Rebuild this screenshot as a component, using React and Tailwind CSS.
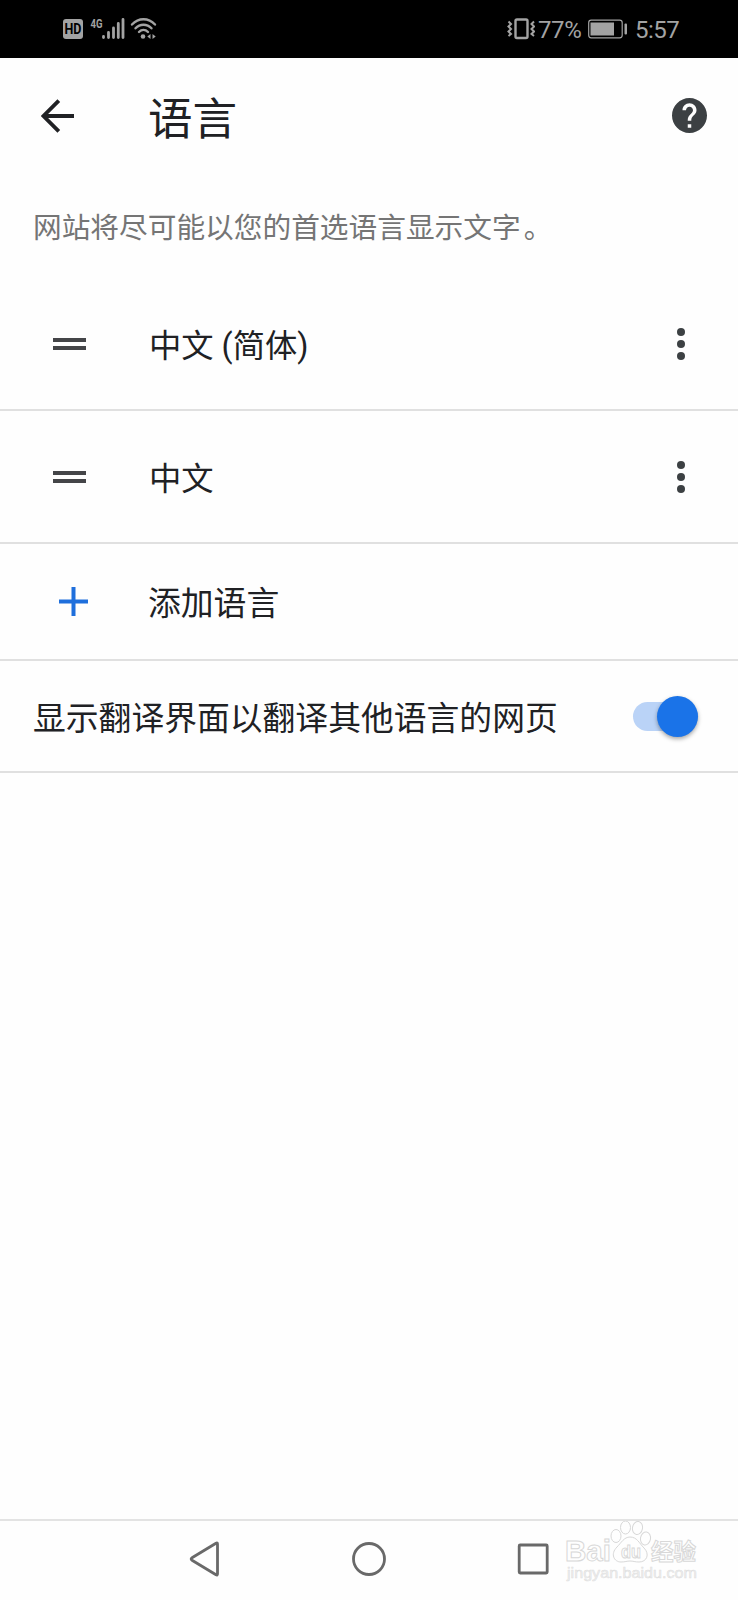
import React, { useState } from "react";

const languages = [
  { id: "zh-CN", name: "中文 (简体)" },
  { id: "zh", name: "中文" },
];

/* ------------------------------
   STATUS BAR
------------------------------ */

const StatusBar = () => {
  return (
    <div className="flex h-[58px] items-center justify-between bg-black pl-[63px] pr-[59px] text-[#a3a3a3]">
      <svg width="95" height="28" viewBox="63 15 95 28" fill="none">
        <rect x="63" y="19" width="20" height="20" rx="3" fill="#a3a3a3" />
        <text
          x="73"
          y="34.2"
          textAnchor="middle"
          fontSize="14"
          fontWeight="700"
          fill="#000"
          textLength="17"
          lengthAdjust="spacingAndGlyphs"
          className="font-['Roboto',sans-serif]"
        >
          HD
        </text>
        <text
          x="90.5"
          y="27.5"
          fontSize="12.5"
          fontWeight="700"
          fill="#a3a3a3"
          textLength="12"
          lengthAdjust="spacingAndGlyphs"
          className="font-['Roboto',sans-serif]"
        >
          4G
        </text>
        <g stroke="#a3a3a3" strokeWidth="2.8" strokeLinecap="round">
          <path d="M103.5 36.5v1M108.5 32.5v5M113.5 28v9.5M118.3 23.5v14M123 19.5v18" />
        </g>
        <g stroke="#a3a3a3" strokeWidth="2.4" strokeLinecap="round">
          <path d="M132 24.5C138.500 17.500 148.500 17.500 155 24.500" />
          <path d="M135.500 28.300C140 23.500 147 23.500 151.500 28.300" />
          <path d="M139 32C141.700 29.200 145.300 29.200 148 32" />
        </g>
        <circle cx="143" cy="36.500" r="2.300" fill="#a3a3a3" />
        <path d="M150.500 34v5l-3.200-2.500zM152.500 34v5l3.200-2.500z" fill="#a3a3a3" />
      </svg>

      <div className="flex items-center font-['Roboto',sans-serif] text-2xl leading-none">
        <svg width="28" height="24" viewBox="507 17 28 24" fill="none">
          <rect
            x="515.500"
            y="19.500"
            width="12"
            height="18.500"
            rx="1.500"
            stroke="#a3a3a3"
            strokeWidth="2.400"
          />
          <path
            d="M508.500 21.500l2.500 2.500-2.500 2.500 2.500 2.500-2.500 2.500 2.500 2.500-2.500 2M534 21.500l-2.500 2.500 2.500 2.500-2.500 2.500 2.500 2.500-2.500 2.500 2.500 2"
            stroke="#a3a3a3"
            strokeWidth="2"
          />
        </svg>
        <span className="ml-[3px] w-[50px] pt-0.5 tracking-[-0.4px]">77%</span>
        <svg width="40" height="20" viewBox="588 19 40 20" fill="none">
          <rect
            x="588.700"
            y="20.200"
            width="33.500"
            height="17.600"
            rx="2.500"
            stroke="#a3a3a3"
            strokeWidth="1.200"
          />
          <rect x="590.500" y="22.500" width="23.500" height="13" fill="#a3a3a3" />
          <rect x="624.500" y="23.500" width="2.500" height="11" rx="1" fill="#a3a3a3" />
        </svg>
        <span className="ml-[7px] w-11 pt-0.5 tracking-[-0.5px]">5:57</span>
      </div>
    </div>
  );
};

/* ------------------------------
   HEADER
------------------------------ */

const Header = () => {
  return (
    <header className="flex h-[118px] items-center pb-[3px] pl-[41px] pr-[31px] text-[#202124]">
      <button type="button" aria-label="返回" className="w-[107px]">
        <svg width="34" height="34" viewBox="0 0 34 34" fill="none">
          <path
            d="M33 17H3M17.800 1.700L2.500 17l15.300 15.300"
            stroke="currentColor"
            strokeWidth="3.800"
          />
        </svg>
      </button>
      <h1 className="grow pt-[9px] text-[44.500px] leading-none">语言</h1>
      <button type="button" aria-label="帮助">
        <svg width="35" height="35" viewBox="2 2 20 20" fill="#3c4043">
          <path d="M12 2C6.480 2 2 6.480 2 12s4.480 10 10 10 10-4.480 10-10S17.520 2 12 2zm1 17h-2v-2h2v2zm2.070-7.750l-.9.920C13.450 12.900 13 13.500 13 15h-2v-.5c0-1.100.450-2.100 1.170-2.830l1.240-1.260c.370-.360.590-.860.590-1.410 0-1.100-.9-2-2-2s-2 .9-2 2H8c0-2.210 1.790-4 4-4s4 1.790 4 4c0 .880-.360 1.680-.930 2.250z" />
        </svg>
      </button>
    </header>
  );
};

/* ------------------------------
   LANGUAGE ROW
------------------------------ */

const LanguageRow = ({ name }) => {
  return (
    <li className="flex h-[133px] items-center border-b-2 border-[#e0e0e0] pl-[53px] pr-[53px]">
      <div className="flex w-24 flex-col gap-1">
        <span className="h-1 w-[33px] bg-[#444548]" />
        <span className="h-1 w-[33px] bg-[#444548]" />
      </div>
      <span className="grow pt-1.5 text-[32.300px]">{name}</span>
      <button type="button" aria-label="更多" className="flex flex-col gap-1">
        <span className="size-2 rounded-full bg-[#3c4043]" />
        <span className="size-2 rounded-full bg-[#3c4043]" />
        <span className="size-2 rounded-full bg-[#3c4043]" />
      </button>
    </li>
  );
};

/* ------------------------------
   WATERMARK
------------------------------ */

const Watermark = () => {
  return (
    <svg
      className="absolute right-[34px] top-0 font-['Liberation_Sans','Noto_Sans_CJK_SC',sans-serif]"
      width="144"
      height="66"
      viewBox="560 1521 144 66"
      fill="#fefefe"
      stroke="#d8d8d8"
      strokeWidth="1"
    >
      <text x="565" y="1561" fontSize="30" fontWeight="700" textLength="46" lengthAdjust="spacingAndGlyphs">
        Bai
      </text>
      <ellipse cx="616" cy="1536" rx="5" ry="6.500" />
      <ellipse cx="625.500" cy="1527.500" rx="5" ry="6.500" />
      <ellipse cx="637.500" cy="1528" rx="5" ry="6.500" transform="rotate(10 637.500 1528)" />
      <ellipse cx="645.500" cy="1538.500" rx="5" ry="6.500" transform="rotate(10 645.500 1538.500)" />
      <path d="M630 1537c-6 0-9 6-13 10-7 7-3 15 4 15 4 0 6-1 9-1s5 1 9 1c8 0 11-8 5-14-5-5-7-11-14-11z" />
      <text x="621" y="1558" fontSize="19" fontWeight="700" textLength="20" lengthAdjust="spacingAndGlyphs">
        du
      </text>
      <text x="651" y="1560" fontSize="23" fontWeight="700" textLength="45" lengthAdjust="spacingAndGlyphs">
        经验
      </text>
      <text x="567" y="1578" fontSize="15" fill="#f0f0f0" stroke="#dedede" strokeWidth="0.500" textLength="130" lengthAdjust="spacingAndGlyphs">
        jingyan.baidu.com
      </text>
    </svg>
  );
};

/* ------------------------------
   NAVIGATION BAR
------------------------------ */

const NavBar = () => {
  return (
    <nav className="relative flex h-[81px] items-center justify-center gap-[130px] border-t-2 border-[#e3e3e3] pb-[3px] text-[#696969]">
      <svg width="34" height="38" viewBox="-1 0 34 38" fill="none" stroke="currentColor" strokeWidth="2.800">
        <path d="M28.500 4v30q0 1.500-1.500.8L3 20.200q-1.700-1.200 0-2.400L27 3.200q1.500-.7 1.500.8z" strokeLinejoin="round" />
      </svg>
      <svg width="34" height="36" viewBox="0 0 34 36" fill="none" stroke="currentColor" strokeWidth="2.800">
        <circle cx="17" cy="18" r="15.500" />
      </svg>
      <svg width="34" height="36" viewBox="0 0 34 36" fill="none" stroke="currentColor" strokeWidth="2.800">
        <rect x="3.200" y="4" width="28" height="28" rx="1" />
      </svg>

      <Watermark />
    </nav>
  );
};

const App = () => {
  const [translate, setTranslate] = useState(true);

  return (
    <div className="flex h-[1600px] w-[738px] flex-col overflow-hidden bg-[#fefefe] font-['Roboto','Noto_Sans_CJK_SC',sans-serif] text-[#202124]">
      <StatusBar />
      <Header />

      <main className="grow text-[32.800px] leading-none">
        <p className="flex h-[102px] items-center px-[33px] pt-0.5 text-[28.700px] text-[#757575]">
          网站将尽可能以您的首选语言显示文字
          <span className="ml-[3px]">。</span>
        </p>

        <ul>
          {languages.map((l) => (
            <LanguageRow key={l.id} name={l.name} />
          ))}
        </ul>

        {/* ADD LANGUAGE */}

        <button
          type="button"
          className="flex h-[117px] w-full items-center border-b-2 border-[#e0e0e0] pl-[59px] text-left"
        >
          <svg width="29" height="29" viewBox="0 0 29 29" className="mr-[60px]">
            <path d="M14.500 0v29M0 14.500h29" stroke="#1f6fdc" strokeWidth="4" />
          </svg>
          <span className="pt-1.5">添加语言</span>
        </button>

        {/* TRANSLATE SWITCH */}

        <div className="flex h-28 items-center justify-between border-b-2 border-[#e0e0e0] pl-[33px] pr-10">
          <span className="pt-1.5">显示翻译界面以翻译其他语言的网页</span>
          <button
            type="button"
            role="switch"
            aria-checked={translate}
            aria-label="翻译"
            onClick={() => setTranslate(!translate)}
            className={`flex h-[29px] w-[65px] items-center rounded-full bg-[#bad3f7] ${
              translate ? "justify-end" : "justify-start"
            }`}
          >
            <span className="size-[41px] shrink-0 rounded-full bg-[#1a73e8] shadow-[0_2px_4px_rgba(0,0,0,0.35)]" />
          </button>
        </div>
      </main>

      <NavBar />
    </div>
  );
};

export default App;
